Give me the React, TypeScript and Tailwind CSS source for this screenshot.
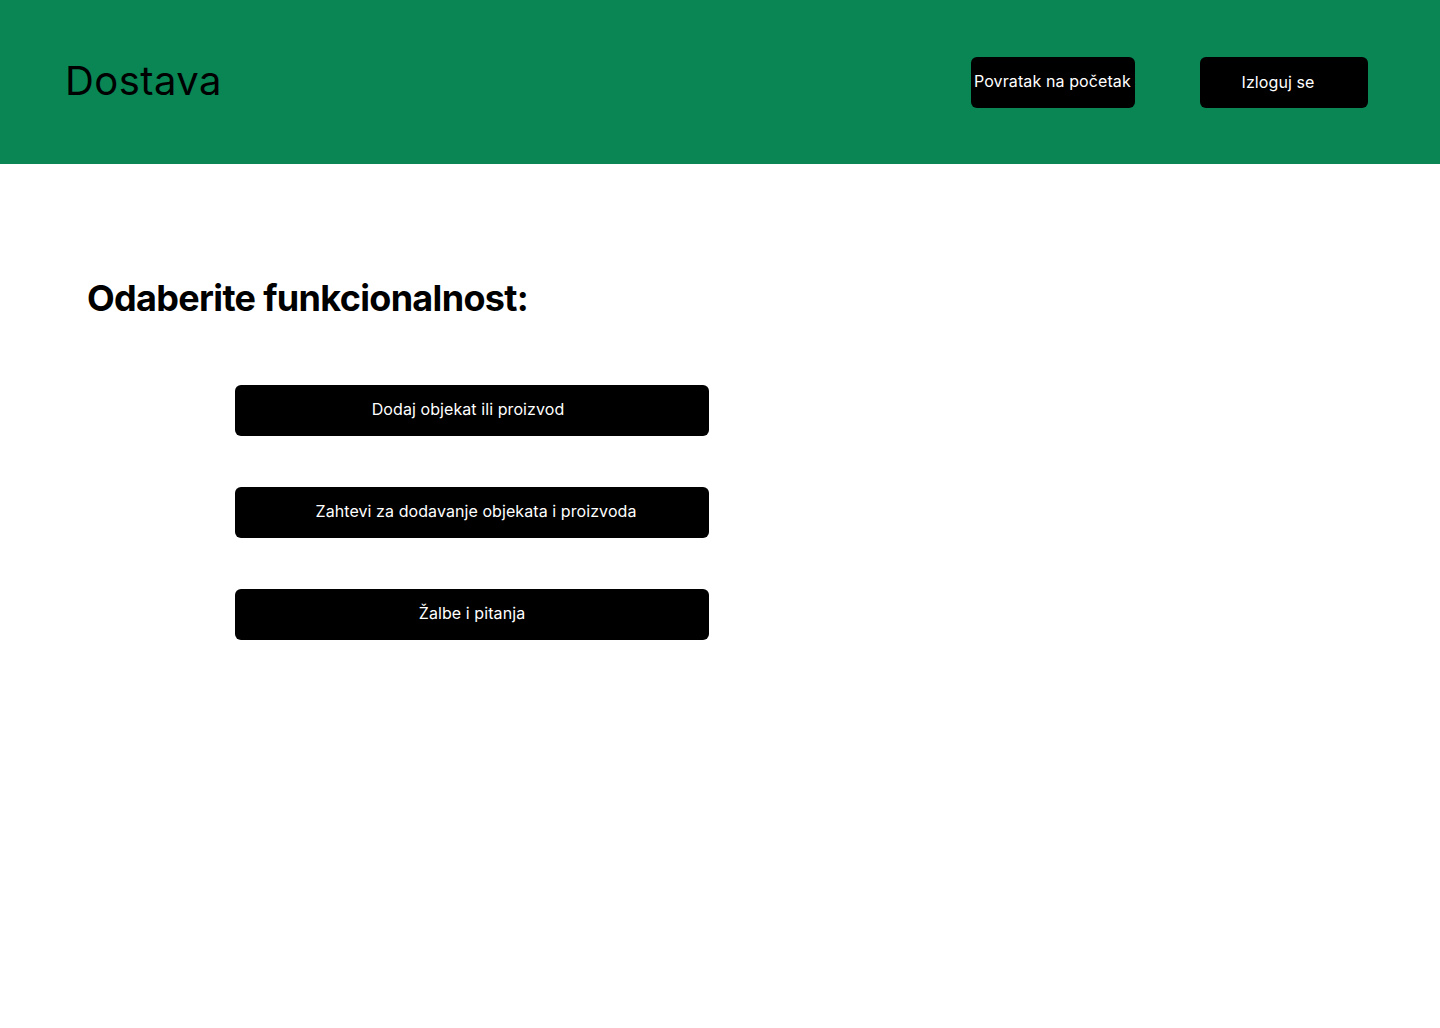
import React from "react";

export default function App() {
  const font = { fontFamily: "Inter, 'Noto Sans', sans-serif" };
  return (
    <div style={font} className="min-h-[1028px] w-full bg-white">
      <header className="flex h-[164px] items-center bg-[#098654] pl-[65px] pr-[72px]">
        <h1 className="mb-[3px] text-[40px] font-normal leading-none tracking-[0.45px] text-black">Dostava</h1>
        <div className="ml-auto flex items-center gap-[65px]">
          <button className="flex h-[51px] w-[164px] items-center justify-start rounded-[6px] bg-black pl-[3px] pb-[3px] text-[16px] tracking-[0.1px] text-white">
            Povratak na početak
          </button>
          <button className="flex h-[51px] w-[168px] items-center justify-center rounded-[6px] bg-black pr-[12px] pb-[1px] text-[16px] tracking-[0.1px] text-white">
            Izloguj se
          </button>
        </div>
      </header>
      <main className="pl-[87px] pt-[114px]">
        <h2 className="text-[36px] font-bold leading-[40px] tracking-[-0.68px] text-black">Odaberite funkcionalnost:</h2>
        <div className="ml-[148px] mt-[67px] flex w-[474px] flex-col gap-[51px]">
          <button className="flex h-[51px] items-center justify-center rounded-[6px] bg-black pr-[8px] pb-[4px] text-[16px] tracking-[0.08px] text-white">
            Dodaj objekat ili proizvod
          </button>
          <button className="flex h-[51px] items-center justify-center rounded-[6px] bg-black pl-[8px] pb-[4px] text-[16px] tracking-[0.08px] text-white">
            Zahtevi za dodavanje objekata i proizvoda
          </button>
          <button className="flex h-[51px] items-center justify-center rounded-[6px] bg-black pb-[4px] text-[16px] tracking-[0.08px] text-white">
            Žalbe i pitanja
          </button>
        </div>
      </main>
    </div>
  );
}
